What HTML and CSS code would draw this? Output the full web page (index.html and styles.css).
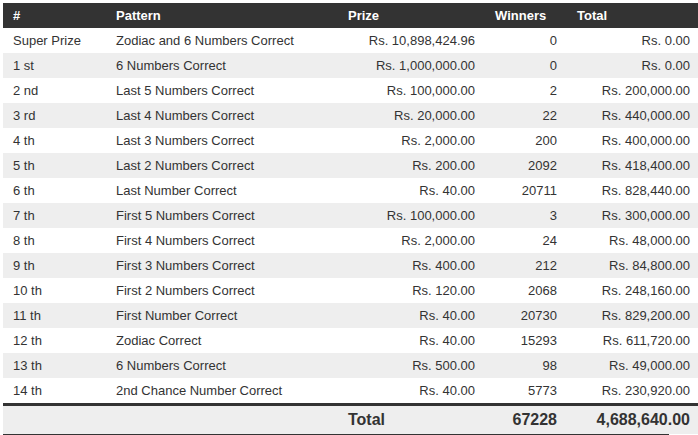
FILE: index.html
```html
<!DOCTYPE html>
<html>
<head>
<meta charset="utf-8">
<link rel="stylesheet" href="styles.css">
</head>
<body>
<table class="results">
  <colgroup>
    <col class="c-rank"><col class="c-pattern"><col class="c-prize"><col class="c-winners"><col class="c-total">
  </colgroup>
  <thead>
    <tr><th>#</th><th>Pattern</th><th>Prize</th><th>Winners</th><th>Total</th></tr>
  </thead>
  <tbody>
    <tr><td>Super Prize</td><td>Zodiac and 6 Numbers Correct</td><td class="num">Rs. 10,898,424.96</td><td class="num">0</td><td class="num">Rs. 0.00</td></tr>
    <tr><td>1 st</td><td>6 Numbers Correct</td><td class="num">Rs. 1,000,000.00</td><td class="num">0</td><td class="num">Rs. 0.00</td></tr>
    <tr><td>2 nd</td><td>Last 5 Numbers Correct</td><td class="num">Rs. 100,000.00</td><td class="num">2</td><td class="num">Rs. 200,000.00</td></tr>
    <tr><td>3 rd</td><td>Last 4 Numbers Correct</td><td class="num">Rs. 20,000.00</td><td class="num">22</td><td class="num">Rs. 440,000.00</td></tr>
    <tr><td>4 th</td><td>Last 3 Numbers Correct</td><td class="num">Rs. 2,000.00</td><td class="num">200</td><td class="num">Rs. 400,000.00</td></tr>
    <tr><td>5 th</td><td>Last 2 Numbers Correct</td><td class="num">Rs. 200.00</td><td class="num">2092</td><td class="num">Rs. 418,400.00</td></tr>
    <tr><td>6 th</td><td>Last Number Correct</td><td class="num">Rs. 40.00</td><td class="num">20711</td><td class="num">Rs. 828,440.00</td></tr>
    <tr><td>7 th</td><td>First 5 Numbers Correct</td><td class="num">Rs. 100,000.00</td><td class="num">3</td><td class="num">Rs. 300,000.00</td></tr>
    <tr><td>8 th</td><td>First 4 Numbers Correct</td><td class="num">Rs. 2,000.00</td><td class="num">24</td><td class="num">Rs. 48,000.00</td></tr>
    <tr><td>9 th</td><td>First 3 Numbers Correct</td><td class="num">Rs. 400.00</td><td class="num">212</td><td class="num">Rs. 84,800.00</td></tr>
    <tr><td>10 th</td><td>First 2 Numbers Correct</td><td class="num">Rs. 120.00</td><td class="num">2068</td><td class="num">Rs. 248,160.00</td></tr>
    <tr><td>11 th</td><td>First Number Correct</td><td class="num">Rs. 40.00</td><td class="num">20730</td><td class="num">Rs. 829,200.00</td></tr>
    <tr><td>12 th</td><td>Zodiac Correct</td><td class="num">Rs. 40.00</td><td class="num">15293</td><td class="num">Rs. 611,720.00</td></tr>
    <tr><td>13 th</td><td>6 Numbers Correct</td><td class="num">Rs. 500.00</td><td class="num">98</td><td class="num">Rs. 49,000.00</td></tr>
    <tr><td>14 th</td><td>2nd Chance Number Correct</td><td class="num">Rs. 40.00</td><td class="num">5773</td><td class="num">Rs. 230,920.00</td></tr>
  </tbody>
  <tfoot>
    <tr><td></td><td></td><td class="label">Total</td><td class="num">67228</td><td class="num">4,688,640.00</td></tr>
  </tfoot>
</table>
<div class="scroll-thumb"></div>
</body>
</html>
```

FILE: styles.css
```css
html, body {
  margin: 0;
  padding: 0;
  background: #ffffff;
}

body {
  padding: 3px 0 0 3px;
  font-family: "Liberation Sans", Arial, sans-serif;
  font-size: 13px;
  color: #333333;
  overflow: hidden;
}

.results {
  border-collapse: collapse;
  table-layout: fixed;
  width: 697px;
}

.c-rank { width: 103px; }
.c-pattern { width: 232px; }
.c-prize { width: 147px; }
.c-winners { width: 82px; }
.c-total { width: 133px; }

.results th,
.results td {
  padding: 0 10px;
  height: 25px;
  vertical-align: middle;
  white-space: nowrap;
}

.results th {
  background: #333333;
  color: #ffffff;
  font-weight: bold;
  text-align: left;
}

.results tbody tr:nth-child(even) td {
  background: #eeeeee;
}

.results td.num {
  text-align: right;
}

.results tfoot td {
  background: #eeeeee;
  border-top: 3px solid #333333;
  height: 28px;
  font-weight: bold;
  font-size: 16px;
  color: #333333;
}

.results tfoot td.label {
  text-align: left;
}

.scroll-thumb {
  width: 666px;
  height: 2px;
  background: #333333;
}
```
